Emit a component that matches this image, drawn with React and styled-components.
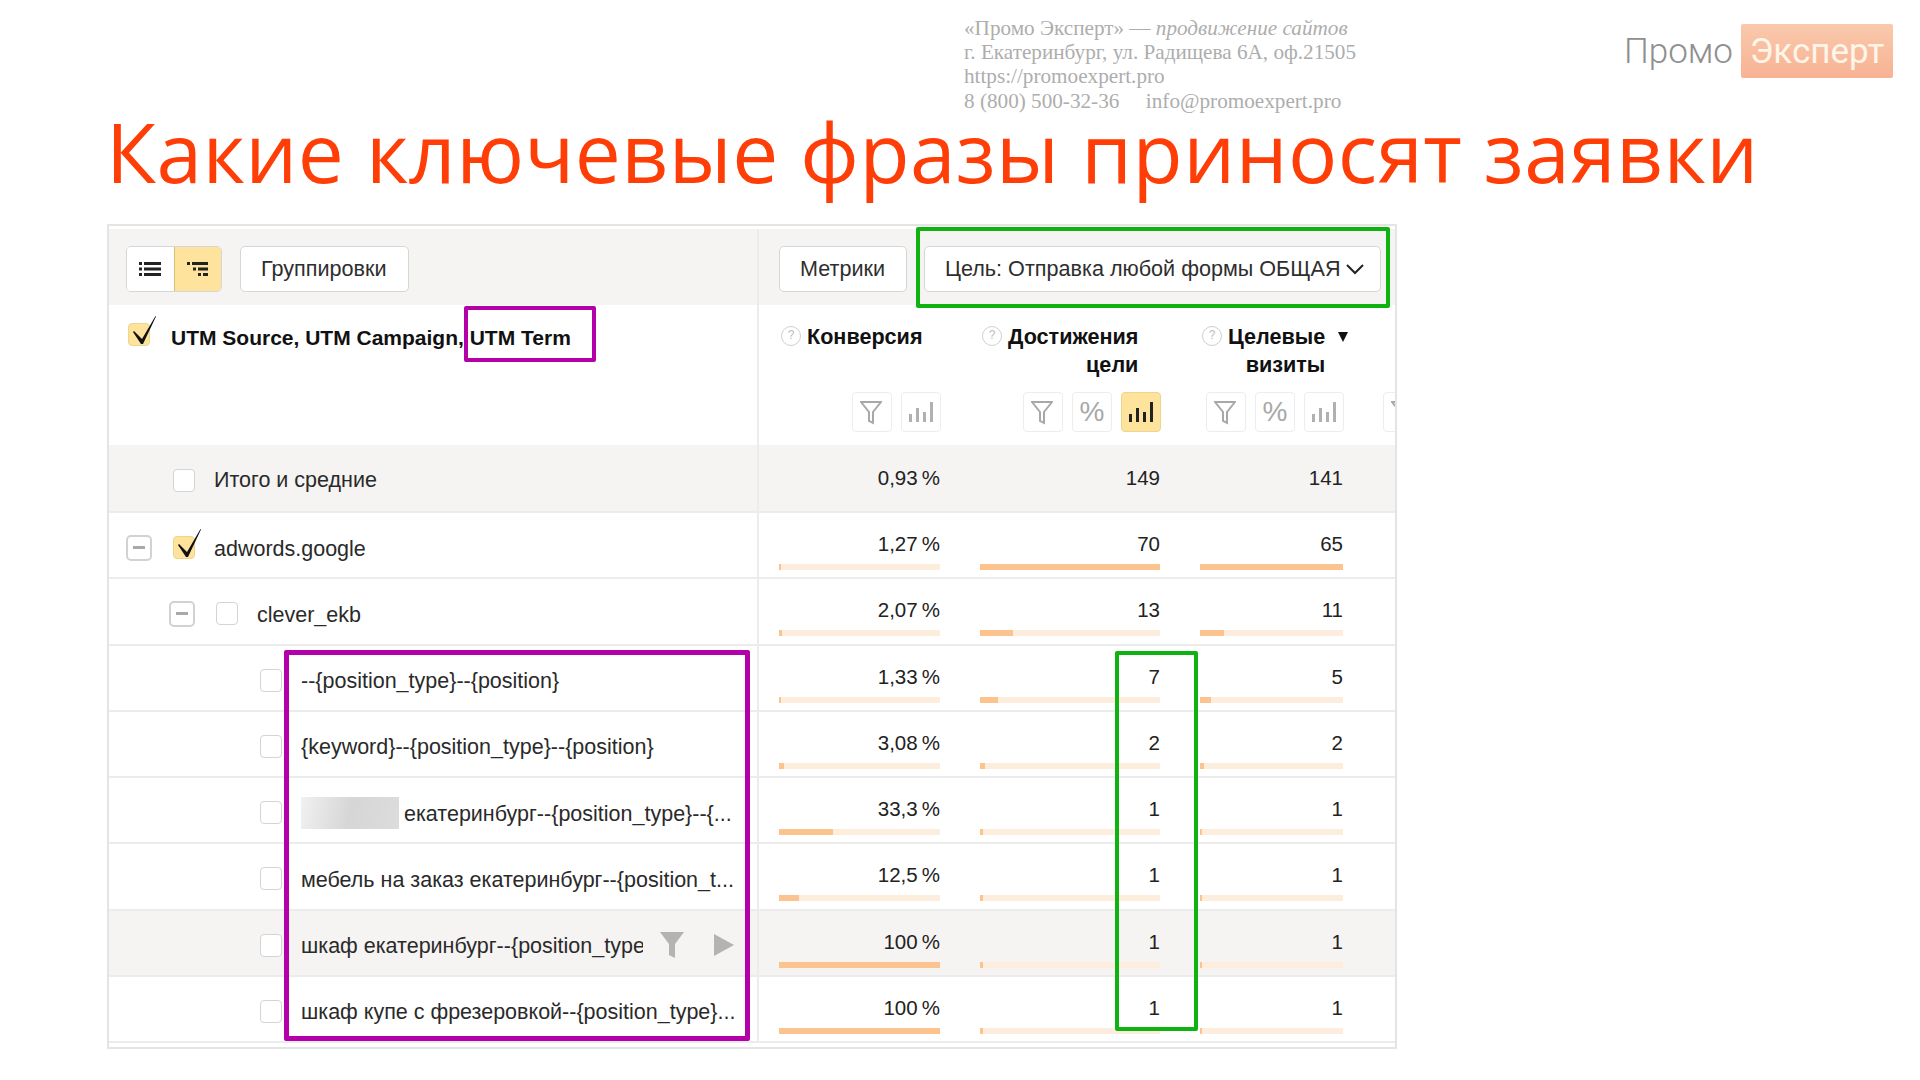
import React from 'react'
import styled, { createGlobalStyle } from 'styled-components'

const Global = createGlobalStyle`
  html, body {
    margin: 0;
    background: #fff;
  }
  body {
    font-family: "Liberation Sans", Arial, sans-serif;
    color: #222;
  }
`

const Slide = styled.div`
  width: 1920px;
  height: 1080px;
  overflow: hidden;
  background: #fff;
`

const Header = styled.div`
  display: flex;
  align-items: flex-start;
  height: 112px;
  padding: 16px 27px 0 964px;
  box-sizing: border-box;
`

const Address = styled.div`
  font-family: "Liberation Serif", serif;
  font-size: 21.2px;
  line-height: 24.2px;
  color: #adadad;
  white-space: pre;

  i {
    font-style: italic;
  }
`

const Logo = styled.div`
  margin-left: auto;
  margin-top: 8px;
  display: flex;
  align-items: center;
  gap: 8px;
  font-family: Roboto, sans-serif;
  font-weight: 300;
  font-size: 35px;
`

const LogoGray = styled.span`
  color: #8f8f8f;
`

const LogoBox = styled.span`
  width: 152px;
  height: 54px;
  display: flex;
  align-items: center;
  justify-content: center;
  color: #fff5e8;
  font-weight: 400;
  border-radius: 2px;
  background: linear-gradient(#f9c9ac, #f8b294);
`

const Title = styled.h1`
  margin: 0 0 0 106px;
  height: 112px;
  line-height: 78px;
  font-family: "Open Sans", sans-serif;
  font-weight: 400;
  font-size: 82px;
  letter-spacing: 0.43px;
  color: #ff3d07;
  white-space: nowrap;
`

const Table = styled.div`
  position: relative;
  width: 1290px;
  height: 825px;
  margin-left: 107px;
  box-sizing: border-box;
  border: 2px solid #e4e4e4;
  overflow: hidden;
  background: #fff;
`

const Toolbar = styled.div`
  display: flex;
  height: 76px;
  margin-top: 3px;
  box-sizing: border-box;
  background: #f5f4f2;
`

const ToolbarLeft = styled.div`
  width: 650px;
  box-sizing: border-box;
  display: flex;
  align-items: center;
  gap: 18px;
  padding: 4px 0 0 17px;
  border-right: 2px solid #ececec;
`

const ToolbarRight = styled.div`
  display: flex;
  align-items: center;
  gap: 17px;
  padding: 4px 0 0 20px;
`

const Segments = styled.div`
  display: flex;
  width: 96px;
  height: 46px;
  box-sizing: border-box;
  border: 1px solid #d6d6d6;
  border-radius: 5px;
  overflow: hidden;
  background: #fff;
`

const Segment = styled.div`
  flex: 1;
  display: flex;
  align-items: center;
  justify-content: center;
  background: ${p => (p.$active ? '#fee39c' : '#fff')};
  border-left: ${p => (p.$active ? '1px solid #d9bf72' : 'none')};
`

const Button = styled.div`
  height: 46px;
  width: ${p => p.$w}px;
  box-sizing: border-box;
  display: flex;
  align-items: center;
  justify-content: space-between;
  padding: 0 16px 0 20px;
  border: 1px solid #d6d6d6;
  border-radius: 5px;
  background: #fff;
  font-size: 21.6px;
  color: #2e2e2e;
  white-space: nowrap;
`

const Row = styled.div`
  display: flex;
  height: ${p => p.$h || 66.25}px;
  box-sizing: border-box;
  border-bottom: ${p => (p.$head ? 'none' : '2px solid #ececec')};
  background: ${p => (p.$shade ? '#f5f4f2' : '#fff')};
`

const LeftCell = styled.div`
  width: 650px;
  flex: none;
  box-sizing: border-box;
  display: flex;
  align-items: center;
  padding: 5px 0 0 ${p => p.$pad}px;
  border-right: 2px solid #ececec;
  font-size: 21.5px;
  color: #2a2a2a;
`

const HeadLeft = styled(LeftCell)`
  align-items: flex-start;
  padding-top: 18px;
  font-size: 21px;
  font-weight: 700;
  color: #111;
`

const Metrics = styled.div`
  flex: 1;
  display: grid;
  grid-template-columns: 161px 180px 143px 13px;
  column-gap: 40px;
  padding-left: 20px;
`

const HeadCell = styled.div`
  display: flex;
  flex-direction: column;
`

const Label = styled.div`
  height: 87px;
  box-sizing: border-box;
  padding: 18px 0 0 2px;
  display: flex;
  align-items: flex-start;
  gap: 6px;
  font-size: 21.6px;
  font-weight: 700;
  line-height: 28px;
  color: #111;
  white-space: nowrap;
`

const LabelText = styled.div`
  text-align: right;
`

const Help = styled.span`
  width: 20px;
  height: 20px;
  margin-top: 3px;
  flex: none;
  box-sizing: border-box;
  border: 1.5px solid #cfcfcf;
  border-radius: 50%;
  color: #bdbdbd;
  font-size: 12px;
  font-weight: 400;
  line-height: 17px;
  text-align: center;
`

const Sort = styled.span`
  width: 0;
  height: 0;
  margin: 9px 0 0 7px;
  border-left: 5px solid transparent;
  border-right: 5px solid transparent;
  border-top: 10px solid #111;
`

const Tools = styled.div`
  display: flex;
  gap: 9px;
  justify-content: ${p => (p.$start ? 'flex-start' : 'flex-end')};
  margin-right: ${p => (p.$start ? 0 : -1)}px;
`

const Tool = styled.div`
  width: 40px;
  height: 40px;
  flex: none;
  box-sizing: border-box;
  display: flex;
  align-items: center;
  justify-content: center;
  border: 1px solid ${p => (p.$active ? '#ecd58f' : '#ededed')};
  border-radius: 4px;
  background: ${p => (p.$active ? '#fee39c' : '#fff')};
  color: #a8a8a8;
  font-size: 28px;
`

const Checkbox = styled.span`
  position: relative;
  width: 22px;
  height: 23px;
  flex: none;
  box-sizing: border-box;
  border: 1px solid ${p => (p.$checked ? '#ecd58f' : '#d4d4d4')};
  border-radius: 4px;
  background: ${p => (p.$checked ? '#fee39c' : '#fff')};
  margin-right: 19px;
`

const HeadCheckbox = styled(Checkbox)`
  margin-right: 21px;
`

const Tick = styled.svg`
  position: absolute;
  left: -1px;
  top: -10px;
  overflow: visible;
`

const Toggle = styled.span`
  width: 26px;
  height: 26px;
  flex: none;
  margin-right: 21px;
  box-sizing: border-box;
  display: flex;
  align-items: center;
  justify-content: center;
  border: 2px solid #d2d2d2;
  border-radius: 5px;
  background: #fff;

  &::after {
    content: '';
    width: 12px;
    height: 3px;
    background: #a9a9a9;
  }
`

const RowText = styled.span`
  padding-top: 3px;
  white-space: nowrap;
`

const TotalText = styled(RowText)`
  padding-top: 0;
`

const ClippedText = styled(RowText)`
  width: 342px;
  overflow: hidden;
`

const Blurred = styled.span`
  width: 98px;
  height: 32px;
  flex: none;
  margin-right: 5px;
  background: linear-gradient(100deg, #f1f1f1, #d6d6d6 50%, #dcdcdc);
`

const RowActions = styled.span`
  display: flex;
  align-items: center;
  gap: 30px;
  margin-left: 17px;
`

const Cell = styled.div`
  position: relative;
  text-align: right;
  font-size: 20.5px;
  line-height: 24px;
  padding-top: ${p => p.$top || 19}px;
  color: #222;
`

const Bar = styled.div`
  height: 6px;
  margin-top: 8px;
  background: #fdeddd;
`

const BarFill = styled.div`
  height: 100%;
  background: #fdc38f;
`

const Frame = styled.div`
  position: absolute;
  box-sizing: border-box;
  border-radius: 2px;
  pointer-events: none;
`

const GoalFrame = styled(Frame)`
  left: 807px;
  top: 1px;
  width: 474px;
  height: 81px;
  border: 4px solid #0fb30f;
`

const TermFrame = styled(Frame)`
  left: 355px;
  top: 80px;
  width: 132px;
  height: 56px;
  border: 4px solid #b300a8;
`

const RowsFrame = styled(Frame)`
  left: 175px;
  top: 424px;
  width: 466px;
  height: 391px;
  border: 5px solid #b300a8;
`

const ValuesFrame = styled(Frame)`
  left: 1006px;
  top: 425px;
  width: 83px;
  height: 380px;
  border: 4px solid #0fb30f;
`

const FunnelSvg = styled.svg`
  margin-right: 3px;
`

const ListIcon = () => (
  <svg width="22" height="14" viewBox="0 0 22 14" fill="#222">
    <rect x="0" y="0" width="3" height="3" />
    <rect x="5" y="0" width="17" height="3" />
    <rect x="0" y="5.5" width="3" height="3" />
    <rect x="5" y="5.5" width="17" height="3" />
    <rect x="0" y="11" width="3" height="3" />
    <rect x="5" y="11" width="17" height="3" />
  </svg>
)

const TreeIcon = () => (
  <svg width="21" height="14" viewBox="0 0 21 14" fill="#222">
    <rect x="0" y="0" width="3" height="3" />
    <rect x="5" y="0" width="16" height="3" />
    <rect x="6" y="5.5" width="3" height="3" />
    <rect x="11" y="5.5" width="10" height="3" />
    <rect x="11" y="11" width="3" height="3" />
    <rect x="16" y="11" width="5" height="3" />
  </svg>
)

const Chevron = () => (
  <svg width="18" height="12" viewBox="0 0 18 12" fill="none" stroke="#222" strokeWidth="2">
    <path d="M1 2l8 8 8-8" />
  </svg>
)

const Funnel = () => (
  <FunnelSvg width="22" height="25" viewBox="0 0 22 25" fill="none" stroke="#a8a8a8" strokeWidth="2">
    <path d="M1 2h20l-8 10v11l-4-2v-9z" />
  </FunnelSvg>
)

const Bars = ({ active }) => (
  <svg width="24" height="20" viewBox="0 0 24 20" fill={active ? '#222' : '#b0b0b0'}>
    <rect x="0" y="12" width="3" height="8" />
    <rect x="7" y="6" width="3" height="14" />
    <rect x="14" y="10" width="3" height="10" />
    <rect x="21" y="0" width="3" height="20" />
  </svg>
)

const CheckMark = () => (
  <Tick width="28" height="32" viewBox="0 0 28 32">
    <path d="M6 17l8 8L27.500 2l.5.500L15 30h-2L5 18z" fill="#111" />
  </Tick>
)

const FilledFunnel = () => (
  <svg width="24" height="26" viewBox="0 0 24 26" fill="#b3b3b3">
    <path d="M0 0h24l-9 12v14l-6-3V12z" />
  </svg>
)

const Play = () => (
  <svg width="20" height="22" viewBox="0 0 20 22" fill="#b3b3b3">
    <path d="M0 0l20 11L0 22z" />
  </svg>
)

const rows = [
  { conv: '1,27', convShare: 1.27, goals: 70, visits: 65 },
  { conv: '2,07', convShare: 2.07, goals: 13, visits: 11 },
  { conv: '1,33', convShare: 1.33, goals: 7, visits: 5 },
  { conv: '3,08', convShare: 3.08, goals: 2, visits: 2 },
  { conv: '33,3', convShare: 33.3, goals: 1, visits: 1 },
  { conv: '12,5', convShare: 12.5, goals: 1, visits: 1 },
  { conv: '100', convShare: 100, goals: 1, visits: 1, shade: true },
  { conv: '100', convShare: 100, goals: 1, visits: 1 },
]

const Value = ({ text, share }) => (
  <Cell>
    {text}
    <Bar>
      <BarFill style={{ width: `${share}%` }} />
    </Bar>
  </Cell>
)

const rowLabels = [
  <LeftCell $pad={17} key="0">
    <Toggle />
    <Checkbox $checked><CheckMark /></Checkbox>
    <RowText>adwords.google</RowText>
  </LeftCell>,
  <LeftCell $pad={60} key="1">
    <Toggle />
    <Checkbox />
    <RowText>clever_ekb</RowText>
  </LeftCell>,
  <LeftCell $pad={151} key="2">
    <Checkbox />
    <RowText>--{'{position_type}'}--{'{position}'}</RowText>
  </LeftCell>,
  <LeftCell $pad={151} key="3">
    <Checkbox />
    <RowText>{'{keyword}'}--{'{position_type}'}--{'{position}'}</RowText>
  </LeftCell>,
  <LeftCell $pad={151} key="4">
    <Checkbox />
    <Blurred />
    <RowText>екатеринбург--{'{position_type}'}--{'{'}...</RowText>
  </LeftCell>,
  <LeftCell $pad={151} key="5">
    <Checkbox />
    <RowText>мебель на заказ екатеринбург--{'{position_t'}...</RowText>
  </LeftCell>,
  <LeftCell $pad={151} key="6">
    <Checkbox />
    <ClippedText>шкаф екатеринбург--{'{position_type}'}--{'{position}'}</ClippedText>
    <RowActions>
      <FilledFunnel />
      <Play />
    </RowActions>
  </LeftCell>,
  <LeftCell $pad={151} key="7">
    <Checkbox />
    <RowText>шкаф купе с фрезеровкой--{'{position_type}'}...</RowText>
  </LeftCell>,
]

const App = () => {
  return (
    <Slide>
      <Global />
      <Header>
        <Address>
          «Промо Эксперт» — <i>продвижение сайтов</i>{'\n'}
          г. Екатеринбург, ул. Радищева 6А, оф.21505{'\n'}
          https://promoexpert.pro{'\n'}
          8 (800) 500-32-36{'     '}info@promoexpert.pro
        </Address>
        <Logo>
          <LogoGray>Промо</LogoGray>
          <LogoBox>Эксперт</LogoBox>
        </Logo>
      </Header>
      <Title>Какие ключевые фразы приносят заявки</Title>
      <Table>
        <Toolbar>
          <ToolbarLeft>
            <Segments>
              <Segment><ListIcon /></Segment>
              <Segment $active><TreeIcon /></Segment>
            </Segments>
            <Button $w={169}>Группировки</Button>
          </ToolbarLeft>
          <ToolbarRight>
            <Button $w={128}>Метрики</Button>
            <Button $w={457}>Цель: Отправка любой формы ОБЩАЯ <Chevron /></Button>
          </ToolbarRight>
        </Toolbar>
        <Row $h={140} $head>
          <HeadLeft $pad={19}>
            <HeadCheckbox $checked><CheckMark /></HeadCheckbox>
            <RowText>UTM Source, UTM Campaign, UTM Term</RowText>
          </HeadLeft>
          <Metrics>
            <HeadCell>
              <Label><Help>?</Help><LabelText>Конверсия</LabelText></Label>
              <Tools>
                <Tool><Funnel /></Tool>
                <Tool><Bars /></Tool>
              </Tools>
            </HeadCell>
            <HeadCell>
              <Label><Help>?</Help><LabelText>Достижения<br />цели</LabelText></Label>
              <Tools>
                <Tool><Funnel /></Tool>
                <Tool>%</Tool>
                <Tool $active><Bars active /></Tool>
              </Tools>
            </HeadCell>
            <HeadCell>
              <Label><Help>?</Help><LabelText>Целевые<br />визиты</LabelText><Sort /></Label>
              <Tools>
                <Tool><Funnel /></Tool>
                <Tool>%</Tool>
                <Tool><Bars /></Tool>
              </Tools>
            </HeadCell>
            <HeadCell>
              <Label />
              <Tools $start><Tool><Funnel /></Tool></Tools>
            </HeadCell>
          </Metrics>
        </Row>
        <Row $h={68} $shade>
          <LeftCell $pad={64}>
            <Checkbox />
            <TotalText>Итого и средние</TotalText>
          </LeftCell>
          <Metrics>
            <Cell $top={21}>0,93&thinsp;%</Cell>
            <Cell $top={21}>149</Cell>
            <Cell $top={21}>141</Cell>
          </Metrics>
        </Row>
        {rows.map((r, i) => (
          <Row key={i} $shade={r.shade}>
            {rowLabels[i]}
            <Metrics>
              <Value text={<>{r.conv}&thinsp;%</>} share={r.convShare} />
              <Value text={r.goals} share={(r.goals / 70) * 100} />
              <Value text={r.visits} share={(r.visits / 65) * 100} />
            </Metrics>
          </Row>
        ))}
        <GoalFrame />
        <TermFrame />
        <RowsFrame />
        <ValuesFrame />
      </Table>
    </Slide>
  )
}

export default App
